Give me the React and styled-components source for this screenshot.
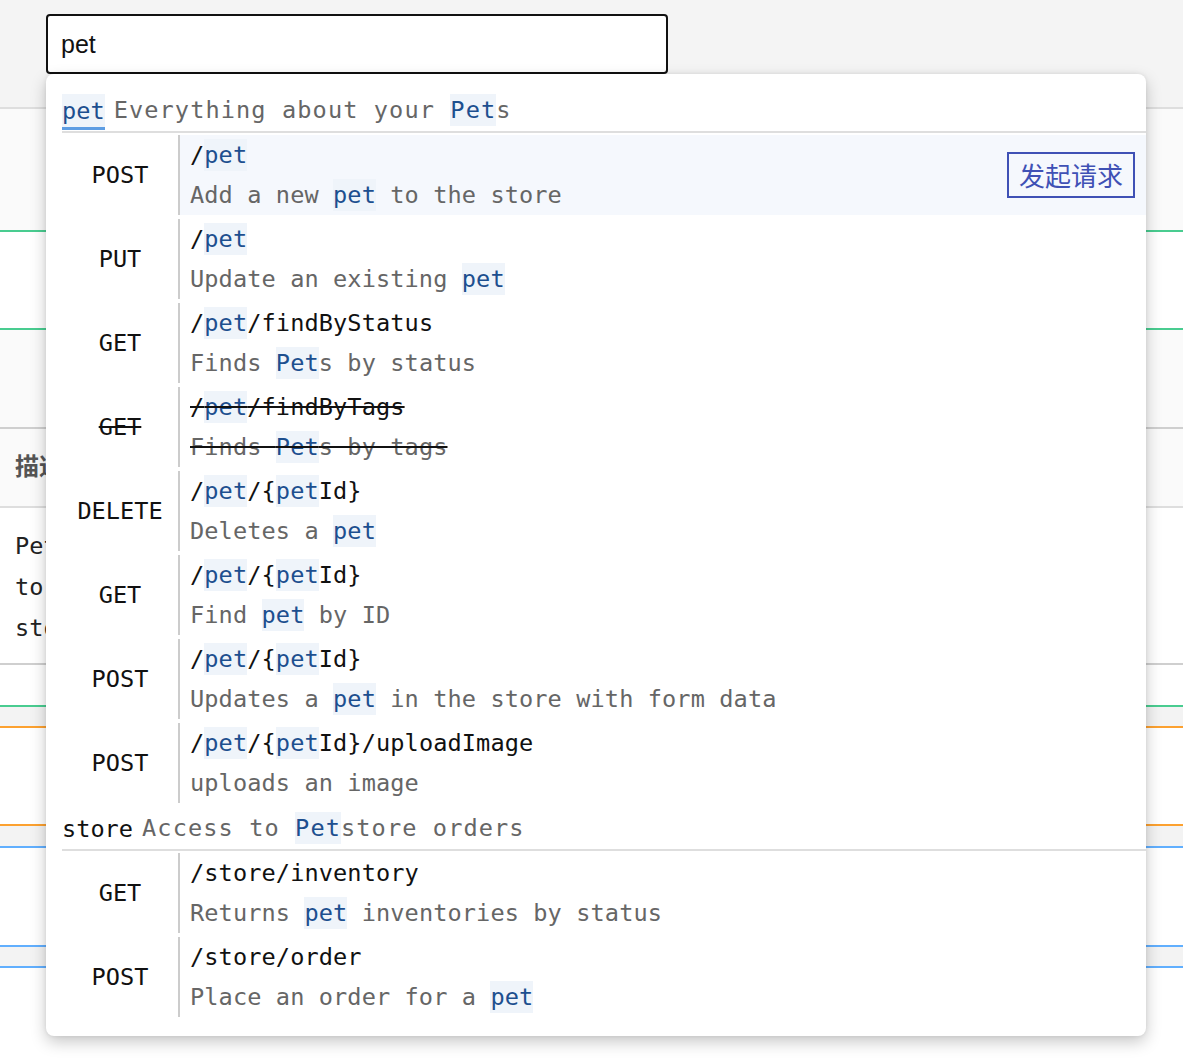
import React from "react";
import styled, { createGlobalStyle } from "styled-components";

const GlobalStyle = createGlobalStyle`
  html, body {
    margin: 0;
    padding: 0;
    background: #fff;
  }
  body {
    font-family: "Liberation Sans", Arial, sans-serif;
  }
`;

const MONO = `"DejaVu Sans Mono", "Liberation Mono", monospace`;

const Page = styled.div`
  position: relative;
  width: 1183px;
  min-height: 1061px;
  overflow: hidden;
  background: #fafafa;
`;

const TopBar = styled.div`
  height: 109px;
  background: #f4f4f4;
  border-bottom: 2px solid #dedede;
  padding: 14px 0 0 46px;
  box-sizing: border-box;
`;

const SearchInput = styled.input`
  display: block;
  box-sizing: border-box;
  width: 622px;
  height: 60px;
  padding: 0 13px;
  border: 2px solid #111;
  border-radius: 4px;
  background: #fff;
  font-family: "Liberation Sans", Arial, sans-serif;
  font-size: 25px;
  color: #111;
  outline: none;
`;

const Band = styled.div`
  height: ${(p) => p.h}px;
  background: ${(p) => p.bg || "#fafafa"};
  border-bottom: 2px solid ${(p) => p.line || "transparent"};
`;

const Heading = styled.div`
  height: 79px;
  box-sizing: border-box;
  padding: 0 0 7px 15px;
  display: flex;
  align-items: center;
  font-family: "Noto Sans CJK SC", sans-serif;
  font-weight: 700;
  font-size: 24px;
  color: #555;
  border-bottom: 2px solid #dedede;
  background: #fafafa;
`;

const Para = styled.div`
  height: 157px;
  padding: 18px 0 0 15px;
  box-sizing: border-box;
  font-family: ${MONO};
  font-size: 23.6px;
  line-height: 41px;
  color: #222;
  border-bottom: 2px solid #cfcfcf;
  background: #fff;
`;

const Dropdown = styled.div`
  position: absolute;
  top: 74px;
  left: 46px;
  width: 1100px;
  box-sizing: border-box;
  padding: 13px 0 17px 16px;
  background: #fff;
  border-radius: 8px;
  box-shadow: 0 6px 16px rgba(0, 0, 0, 0.22), 0 0 4px rgba(0, 0, 0, 0.08);
  font-family: ${MONO};
  font-size: 23.6px;
  color: #111;
`;

const Group = styled.div`
  display: flex;
  flex-direction: column;
`;

const GroupHead = styled.div`
  display: flex;
  align-items: center;
  height: 42px;
  margin-top: 2px;
  border-bottom: 2px solid #dedede;
  white-space: pre;
`;

const Tag = styled.span`
  color: ${(p) => (p.active ? "#1d4f8f" : "#111")};
  background: ${(p) => (p.active ? "#eff4fa" : "transparent")};
  padding: 3px 0 2px;
  border-bottom: 3px solid ${(p) => (p.active ? "#5d9de3" : "transparent")};
  margin-top: 4px;
`;

const GroupDesc = styled.span`
  margin-left: 9px;
  color: #666;
  letter-spacing: 1.1px;
`;

const Row = styled.div`
  display: flex;
  height: 80px;
  margin: 2px 0;
  color: #111;
  text-decoration: ${(p) => (p.deprecated ? "line-through" : "none")};
`;

const Method = styled.div`
  width: 116px;
  flex: none;
  display: flex;
  align-items: center;
  justify-content: center;
`;

const Body = styled.div`
  flex: 1;
  display: flex;
  align-items: center;
  justify-content: space-between;
  border-left: 2px solid #cccccc;
  padding-left: 10px;
  background: ${(p) => (p.hover ? "#f5f8fd" : "transparent")};
`;

const Lines = styled.div`
  display: flex;
  flex-direction: column;
  white-space: pre;
  letter-spacing: 0.1px;
`;

const Path = styled.div`
  line-height: 40px;
  color: #111;
`;

const Desc = styled.div`
  line-height: 40px;
  color: #666;
`;

const Hl = styled.span`
  color: #1d4f8f;
  background: #eff4fa;
  padding: 2px 0;
`;

const SendButton = styled.button`
  margin-right: 11px;
  height: 46px;
  padding: 0 10px;
  border: 2px solid #3f51b5;
  background: transparent;
  color: #3f51b5;
  font-family: "Noto Sans CJK SC", sans-serif;
  font-size: 26px;
  line-height: 42px;
  cursor: pointer;
`;

function mark(text) {
  const parts = text.split(/(pet)/i);
  return parts.map((p, i) =>
    /^pet$/i.test(p) ? <Hl key={i}>{p}</Hl> : <React.Fragment key={i}>{p}</React.Fragment>
  );
}

const groups = [
  {
    tag: "pet",
    active: true,
    desc: "Everything about your Pets",
    ops: [
      { m: "POST", path: "/pet", desc: "Add a new pet to the store", hover: true },
      { m: "PUT", path: "/pet", desc: "Update an existing pet" },
      { m: "GET", path: "/pet/findByStatus", desc: "Finds Pets by status" },
      { m: "GET", path: "/pet/findByTags", desc: "Finds Pets by tags", deprecated: true },
      { m: "DELETE", path: "/pet/{petId}", desc: "Deletes a pet" },
      { m: "GET", path: "/pet/{petId}", desc: "Find pet by ID" },
      { m: "POST", path: "/pet/{petId}", desc: "Updates a pet in the store with form data" },
      { m: "POST", path: "/pet/{petId}/uploadImage", desc: "uploads an image" },
    ],
  },
  {
    tag: "store",
    desc: "Access to Petstore orders",
    ops: [
      { m: "GET", path: "/store/inventory", desc: "Returns pet inventories by status" },
      { m: "POST", path: "/store/order", desc: "Place an order for a pet" },
    ],
  },
];

export default function App() {
  return (
    <>
      <GlobalStyle />
      <Page>
        <TopBar>
          <SearchInput defaultValue="pet" />
        </TopBar>
        <Band h={121} line="#49cc90" />
        <Band h={96} bg="#fff" line="#49cc90" />
        <Band h={97} line="#cfcfcf" />
        <Heading>描述</Heading>
        <Para>
          Pet object that needs
          <br />
          to be added to the
          <br />
          store
        </Para>
        <Band h={40} bg="#fff" line="#49cc90" />
        <Band h={19} bg="#f3f3f3" line="#fca130" />
        <Band h={96} bg="#fff" line="#fca130" />
        <Band h={20} bg="#f3f3f3" line="#61affe" />
        <Band h={97} bg="#fff" line="#61affe" />
        <Band h={19} bg="#f3f3f3" line="#61affe" />
        <Band h={100} bg="#fff" />

        <Dropdown>
          {groups.map((g) => (
            <Group key={g.tag}>
              <GroupHead>
                <Tag active={g.active}>{g.tag}</Tag>
                <GroupDesc>{mark(g.desc)}</GroupDesc>
              </GroupHead>
              {g.ops.map((op, i) => (
                <Row key={i} deprecated={op.deprecated}>
                  <Method>{op.m}</Method>
                  <Body hover={op.hover}>
                    <Lines>
                      <Path>{mark(op.path)}</Path>
                      <Desc>{mark(op.desc)}</Desc>
                    </Lines>
                    {op.hover && <SendButton>发起请求</SendButton>}
                  </Body>
                </Row>
              ))}
            </Group>
          ))}
        </Dropdown>
      </Page>
    </>
  );
}
